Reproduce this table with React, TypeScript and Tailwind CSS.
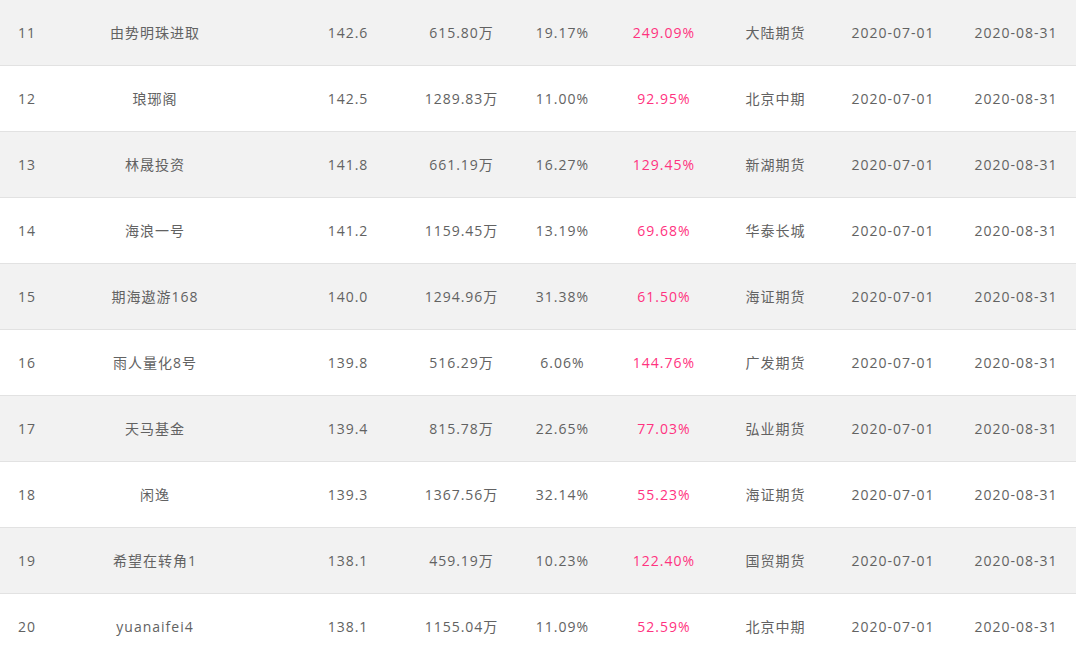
import React from "react";

type Row = {
  rank: number;
  name: string;
  score: string;
  scale: string;
  drawdown: string;
  gain: string;
  broker: string;
  start: string;
  end: string;
};

const rows: Row[] = [
  { rank: 11, name: "由势明珠进取", score: "142.6", scale: "615.80万", drawdown: "19.17%", gain: "249.09%", broker: "大陆期货", start: "2020-07-01", end: "2020-08-31" },
  { rank: 12, name: "琅琊阁", score: "142.5", scale: "1289.83万", drawdown: "11.00%", gain: "92.95%", broker: "北京中期", start: "2020-07-01", end: "2020-08-31" },
  { rank: 13, name: "林晟投资", score: "141.8", scale: "661.19万", drawdown: "16.27%", gain: "129.45%", broker: "新湖期货", start: "2020-07-01", end: "2020-08-31" },
  { rank: 14, name: "海浪一号", score: "141.2", scale: "1159.45万", drawdown: "13.19%", gain: "69.68%", broker: "华泰长城", start: "2020-07-01", end: "2020-08-31" },
  { rank: 15, name: "期海遨游168", score: "140.0", scale: "1294.96万", drawdown: "31.38%", gain: "61.50%", broker: "海证期货", start: "2020-07-01", end: "2020-08-31" },
  { rank: 16, name: "雨人量化8号", score: "139.8", scale: "516.29万", drawdown: "6.06%", gain: "144.76%", broker: "广发期货", start: "2020-07-01", end: "2020-08-31" },
  { rank: 17, name: "天马基金", score: "139.4", scale: "815.78万", drawdown: "22.65%", gain: "77.03%", broker: "弘业期货", start: "2020-07-01", end: "2020-08-31" },
  { rank: 18, name: "闲逸", score: "139.3", scale: "1367.56万", drawdown: "32.14%", gain: "55.23%", broker: "海证期货", start: "2020-07-01", end: "2020-08-31" },
  { rank: 19, name: "希望在转角1", score: "138.1", scale: "459.19万", drawdown: "10.23%", gain: "122.40%", broker: "国贸期货", start: "2020-07-01", end: "2020-08-31" },
  { rank: 20, name: "yuanaifei4", score: "138.1", scale: "1155.04万", drawdown: "11.09%", gain: "52.59%", broker: "北京中期", start: "2020-07-01", end: "2020-08-31" },
];

const RankRow = ({ row, shaded }: { row: Row; shaded: boolean }) => {
  return (
    <div
      className={`grid grid-cols-[90px_162px_153px_107px_101px_107px_114px_120px_122px] h-[66px] items-center border-b border-[#e2e2e2] ${
        shaded ? "bg-[#f2f2f2]" : "bg-white"
      }`}
    >
      <div className="pl-[18px]">{row.rank}</div>
      <div className="flex justify-center pr-[32px]">{row.name}</div>
      <div className="flex justify-center pl-[39px]">{row.score}</div>
      <div className="flex justify-center pl-[6px]">{row.scale}</div>
      <div className="flex justify-center">{row.drawdown}</div>
      <div className="flex justify-center pr-[5px] text-[#ff3380]">{row.gain}</div>
      <div className="flex justify-center pr-[3px]">{row.broker}</div>
      <div className="flex justify-center pr-[2px]">{row.start}</div>
      <div className="flex justify-center pl-[2px]">{row.end}</div>
    </div>
  );
};

export default function App() {
  return (
    <div className="w-[1076px] h-[657px] overflow-hidden bg-white text-[14px] tracking-[1px] whitespace-nowrap text-[#626262] font-['Open_Sans','Noto_Sans_CJK_SC',sans-serif]">
      {rows.map((row, i) => (
        <RankRow key={row.rank} row={row} shaded={i % 2 === 0} />
      ))}
    </div>
  );
}
